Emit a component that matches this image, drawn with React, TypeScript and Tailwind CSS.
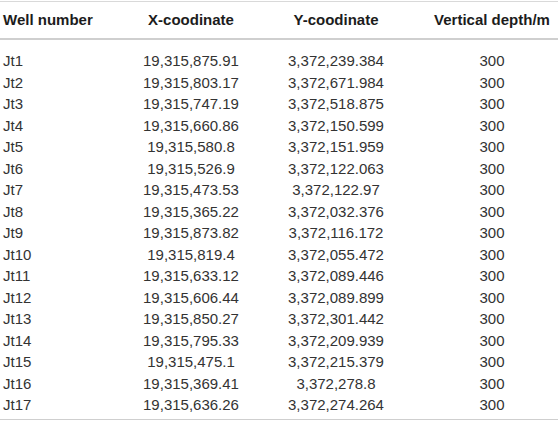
const rows: [string, string, string][] = [
  ["Jt1", "19,315,875.91", "3,372,239.384"],
  ["Jt2", "19,315,803.17", "3,372,671.984"],
  ["Jt3", "19,315,747.19", "3,372,518.875"],
  ["Jt4", "19,315,660.86", "3,372,150.599"],
  ["Jt5", "19,315,580.8", "3,372,151.959"],
  ["Jt6", "19,315,526.9", "3,372,122.063"],
  ["Jt7", "19,315,473.53", "3,372,122.97"],
  ["Jt8", "19,315,365.22", "3,372,032.376"],
  ["Jt9", "19,315,873.82", "3,372,116.172"],
  ["Jt10", "19,315,819.4", "3,372,055.472"],
  ["Jt11", "19,315,633.12", "3,372,089.446"],
  ["Jt12", "19,315,606.44", "3,372,089.899"],
  ["Jt13", "19,315,850.27", "3,372,301.442"],
  ["Jt14", "19,315,795.33", "3,372,209.939"],
  ["Jt15", "19,315,475.1", "3,372,215.379"],
  ["Jt16", "19,315,369.41", "3,372,278.8"],
  ["Jt17", "19,315,636.26", "3,372,274.264"],
];

const cols = "grid grid-cols-[136px_110px_180px_132px]";

export default function App() {
  return (
    <div className="w-[558px] h-[424px] bg-white pt-px font-['Liberation_Sans',Arial,sans-serif] text-[15px]">
      <div className="border-t border-[#d9d9d9]">
        {/* header */}
        <div className={`${cols} h-[38px] items-center border-b-2 border-[#cfcfcf] font-bold text-[#1c1c1c]`}>
          <div className="pl-[3px]">Well number</div>
          <div className="text-center">X-coodinate</div>
          <div className="text-center">Y-coodinate</div>
          <div className="text-center">Vertical depth/m</div>
        </div>

        {/* body */}
        <div className="pt-[10px] pb-[3px] border-b border-[#cfcfcf] text-[#333333]">
          {rows.map(([well, x, y]) => (
            <div key={well} className={`${cols} h-[21.5px] items-center leading-[21.5px]`}>
              <div className="pl-[3px]">{well}</div>
              <div className="text-center">{x}</div>
              <div className="text-center">{y}</div>
              <div className="text-center">300</div>
            </div>
          ))}
        </div>
      </div>
    </div>
  );
}
